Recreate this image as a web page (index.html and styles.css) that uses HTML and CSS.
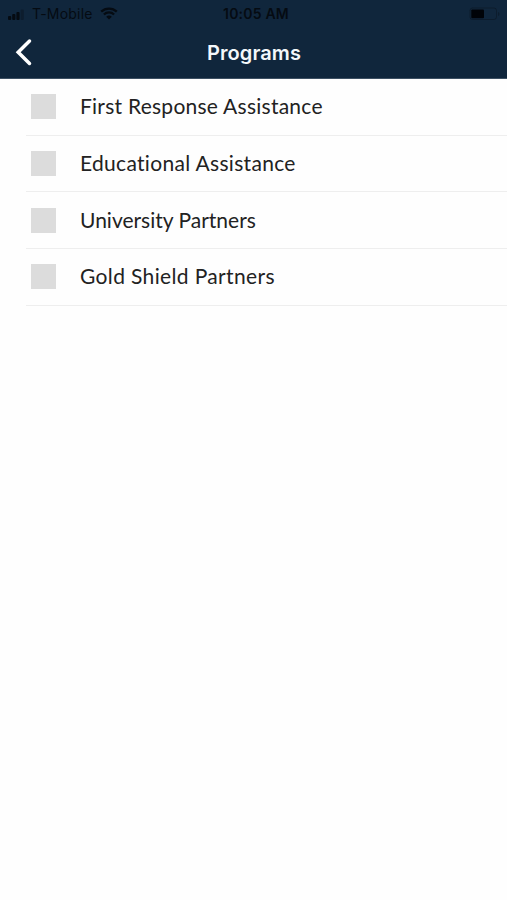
FILE: index.html
```html
<!DOCTYPE html>
<html lang="en">
<head>
<meta charset="utf-8">
<title>Programs</title>
<link rel="stylesheet" href="styles.css">
</head>
<body>
<header class="header">
  <div class="status">
    <div class="carrier">
      <svg class="signal" width="18" height="12" viewBox="0 0 18 12"><rect x="0" y="7" width="3.2" height="4" rx="1"/><rect x="4.2" y="5" width="3.2" height="6" rx="1"/><rect x="8.4" y="3" width="3.2" height="8" rx="1"/><rect x="12.6" y="0.5" width="3.2" height="10.5" rx="1" opacity=".3"/></svg>
      <span class="network">T-Mobile</span>
      <svg class="wifi" width="18" height="13" viewBox="0 0 18 13"><path d="M1.2 4.7a11.3 11.3 0 0 1 15.6 0M3.9 7.5a7.3 7.3 0 0 1 10.2 0" fill="none" stroke="currentColor" stroke-width="2.3"/><path d="M9 12.5 6.2 9.7a4.1 4.1 0 0 1 5.6 0Z"/></svg>
    </div>
    <time class="time">10:05 AM</time>
    <svg class="battery" width="31" height="14" viewBox="0 0 31 14"><rect x="1" y="1" width="26.5" height="11.5" rx="2.5" fill="none" stroke="currentColor" opacity=".35"/><rect x="2.3" y="2.6" width="12.7" height="8.6" rx="1" fill="#000308"/><path d="M29 5v4c1-.4 1.4-1 1.4-2S30 5.4 29 5Z" opacity=".35"/></svg>
  </div>
  <nav class="nav">
    <button class="back" aria-label="Back"><svg width="18" height="28" viewBox="0 0 18 28"><path d="M14.5 3 3.2 14.2 14.5 25.4" fill="none" stroke="#fff" stroke-width="3.5" stroke-linecap="round" stroke-linejoin="miter"/></svg></button>
    <h1 class="title">Programs</h1>
  </nav>
</header>
<main class="list">
  <label class="row"><span class="box"></span><span class="name first">First Response Assistance</span></label>
  <label class="row"><span class="box"></span><span class="name education">Educational Assistance</span></label>
  <label class="row"><span class="box"></span><span class="name university">University Partners</span></label>
  <label class="row"><span class="box"></span><span class="name gold">Gold Shield Partners</span></label>
</main>
</body>
</html>
```
FILE: styles.css
```css
* { box-sizing: border-box; }
body { margin: 0; height: 900px; background: #fefefe; overflow: hidden; }
.header { height: 79px; background: #10263c; border-bottom: 1px solid #3d5063; }
.status {
  display: grid; grid-template-columns: 1fr auto 1fr; align-items: center;
  height: 27px; padding: 0 7px 0 8px;
  color: #050b12; fill: #050b12;
  font: 14px/27px Inter, sans-serif;
}
.carrier { display: flex; align-items: center; }
.network { margin-left: 6px; letter-spacing: .2px; }
.wifi { margin-left: 7px; }
.signal { margin-top: 3px; }
.time { padding-left: 4px; font-weight: 600; font-size: 14px; letter-spacing: .2px; }
.battery { justify-self: end; }
.nav { display: grid; grid-template-columns: 60px 1fr 60px; align-items: center; height: 50px; }
.back { display: flex; margin-left: 15px; padding: 0; border: 0; background: none; }
.title { margin: 0; padding: 2px 0 0 1px; color: #f4f8fb; text-align: center; font: 600 20px/28px Inter, sans-serif; letter-spacing: .1px; }
.list { padding-left: 26px; }
.row {
  display: flex; align-items: center; height: 56.7px; padding-left: 5px;
  border-bottom: 1.5px solid #eee;
}
.box { width: 25px; height: 25px; background: #dcdcdc; }
.name {
  margin-left: 24px; padding-bottom: 1px; color: #222; font: 21px/28px Lato, sans-serif;
  font-variant-ligatures: none; white-space: nowrap;
}
.first { letter-spacing: .25px; }
.education { letter-spacing: .31px; }
.university { letter-spacing: 0; }
.gold { letter-spacing: .36px; }
```
